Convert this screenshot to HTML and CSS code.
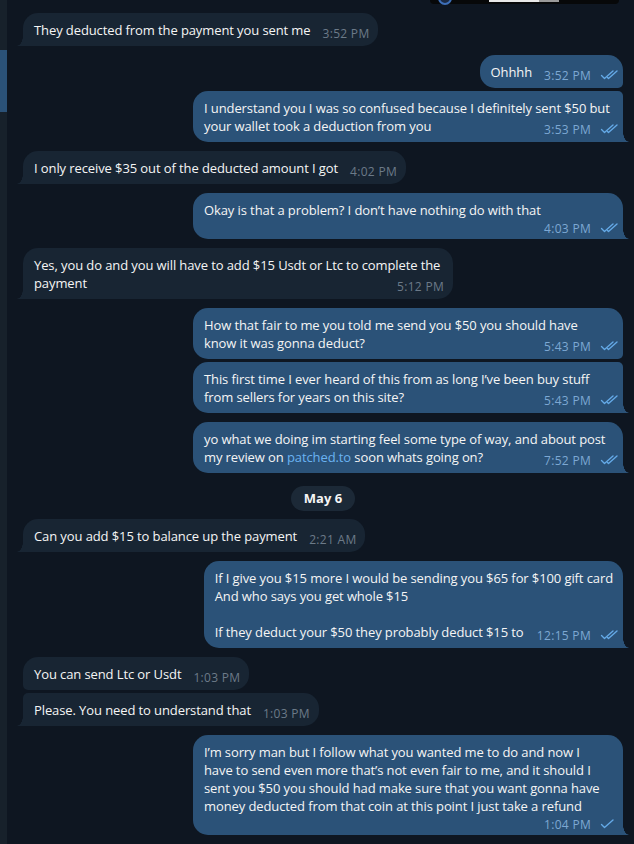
FILE: index.html
```html
<!DOCTYPE html>
<html lang="en">
<head>
<meta charset="utf-8">
<title>Chat</title>
<link rel="stylesheet" href="styles.css">
</head>
<body>
<div class="app">
  <aside class="rail"><div class="rail-active"></div></aside>
  <main class="chat">
    <div class="media"><span class="media-dot"></span><span class="media-bar"></span></div>

    <div class="group in">
      <div class="bubble">They deducted from the payment you sent me<span class="meta"><span class="time">3:52 PM</span></span></div>
    </div>

    <div class="group out">
      <div class="bubble">Ohhhh<span class="meta"><span class="time">3:52 PM</span><svg class="check" viewBox="0 0 18 10"><path d="M1.5 5.5l3 3L13 1"/><path d="M7.5 7.5l1 1L17 1"/></svg></span></div>
      <div class="bubble">I understand you I was so confused because I definitely sent $50 but your wallet took a deduction from you<span class="meta"><span class="time">3:53 PM</span><svg class="check" viewBox="0 0 18 10"><path d="M1.5 5.5l3 3L13 1"/><path d="M7.5 7.5l1 1L17 1"/></svg></span></div>
    </div>

    <div class="group in">
      <div class="bubble">I only receive $35 out of the deducted amount I got<span class="meta"><span class="time">4:02 PM</span></span></div>
    </div>

    <div class="group out">
      <div class="bubble stacked">Okay is that a problem? I don’t have nothing do with that<span class="meta"><span class="time">4:03 PM</span><svg class="check" viewBox="0 0 18 10"><path d="M1.5 5.5l3 3L13 1"/><path d="M7.5 7.5l1 1L17 1"/></svg></span></div>
    </div>

    <div class="group in">
      <div class="bubble">Yes, you do and you will have to add $15 Usdt or Ltc to complete the payment<span class="meta"><span class="time">5:12 PM</span></span></div>
    </div>

    <div class="group out">
      <div class="bubble">How that fair to me you told me send you $50 you should have know it was gonna deduct?<span class="meta"><span class="time">5:43 PM</span><svg class="check" viewBox="0 0 18 10"><path d="M1.5 5.5l3 3L13 1"/><path d="M7.5 7.5l1 1L17 1"/></svg></span></div>
      <div class="bubble">This first time I ever heard of this from as long I’ve been buy stuff from sellers for years on this site?<span class="meta"><span class="time">5:43 PM</span><svg class="check" viewBox="0 0 18 10"><path d="M1.5 5.5l3 3L13 1"/><path d="M7.5 7.5l1 1L17 1"/></svg></span></div>
    </div>

    <div class="group out">
      <div class="bubble">yo what we doing im starting feel some type of way, and about post my review on <a class="link" href="#">patched.to</a> soon whats going on?<span class="meta"><span class="time">7:52 PM</span><svg class="check" viewBox="0 0 18 10"><path d="M1.5 5.5l3 3L13 1"/><path d="M7.5 7.5l1 1L17 1"/></svg></span></div>
    </div>

    <div class="date"><span class="date-pill">May 6</span></div>

    <div class="group in">
      <div class="bubble">Can you add $15 to balance up the payment<span class="meta"><span class="time">2:21 AM</span></span></div>
    </div>

    <div class="group out">
      <div class="bubble">If I give you $15 more I would be sending you $65 for $100 gift card<br>And who says you get whole $15<br><br>If they deduct your $50 they probably deduct $15 to<span class="meta"><span class="time">12:15 PM</span><svg class="check" viewBox="0 0 18 10"><path d="M1.5 5.5l3 3L13 1"/><path d="M7.5 7.5l1 1L17 1"/></svg></span></div>
    </div>

    <div class="group in">
      <div class="bubble">You can send Ltc or Usdt<span class="meta"><span class="time">1:03 PM</span></span></div>
      <div class="bubble">Please. You need to understand that<span class="meta"><span class="time">1:03 PM</span></span></div>
    </div>

    <div class="group out">
      <div class="bubble stacked">I’m sorry man but I follow what you wanted me to do and now I<br>have to send even more that’s not even fair to me, and it should I sent you $50 you should had make sure that you want gonna have money deducted from that coin at this point I just take a refund<span class="meta"><span class="time">1:04 PM</span><svg class="check" viewBox="0 0 18 10"><path d="M1.5 5.5l3 3L13 1"/></svg></span></div>
    </div>
  </main>
</div>
</body>
</html>
```

FILE: styles.css
```css
* {
  box-sizing: border-box;
}

html,
body {
  margin: 0;
  background: #0e1621;
}

body {
  font-family: "Open Sans", "Noto Sans", sans-serif;
  font-size: 13px;
  color: #f5f5f5;
}

.app {
  display: flex;
  min-height: 844px;
  overflow: hidden;
}

.rail {
  flex: none;
  width: 7px;
  background: #17212b;
  padding-top: 50px;
}

.rail-active {
  height: 62px;
  background: #2b5278;
}

.chat {
  flex: 1;
  display: flex;
  flex-direction: column;
  padding: 0 11px 0 16px;
}

.media {
  position: relative;
  align-self: flex-end;
  width: 189px;
  height: 4px;
  margin-right: 4px;
  background: #070809;
  border-radius: 0 0 10px 10px;
}

.media-dot {
  position: absolute;
  left: 8px;
  top: -9px;
  width: 14px;
  height: 14px;
  border-radius: 50%;
  border: 2px solid #3d6fb8;
  background: #1b2a44;
}

.media-bar {
  position: absolute;
  left: 59px;
  top: 0;
  width: 70px;
  height: 2px;
  background: linear-gradient(to right, #e8e8e8 0 72%, #9a9a9a 72% 100%);
}

.group {
  display: flex;
  flex-direction: column;
  gap: 3px;
  margin-top: 9px;
}

.group.in {
  align-items: flex-start;
}

.group.out {
  align-items: flex-end;
}

.bubble {
  position: relative;
  max-width: 430px;
  padding: 8px 9px 7px 11px;
  border-radius: 15px;
  line-height: 18px;
  letter-spacing: -0.1px;
  overflow-wrap: break-word;
}

.in .bubble {
  background: #182533;
}

.out .bubble {
  background: #2b5278;
  padding-right: 10px;
}

.in .bubble:not(:first-child) {
  border-top-left-radius: 5px;
}

.in .bubble:not(:last-child) {
  border-bottom-left-radius: 5px;
}

.in .bubble:last-child {
  border-bottom-left-radius: 0;
}

.out .bubble:not(:first-child) {
  border-top-right-radius: 5px;
}

.out .bubble:not(:last-child) {
  border-bottom-right-radius: 5px;
}

.out .bubble:last-child {
  border-bottom-right-radius: 0;
}

.in .bubble:last-child::before,
.out .bubble:last-child::before {
  content: "";
  position: absolute;
  bottom: 0;
  width: 6px;
  height: 10px;
}

.in .bubble:last-child::before {
  left: -6px;
  background: radial-gradient(6px 10px at 0 0, transparent 94%, #182533 100%);
}

.out .bubble:last-child::before {
  right: -6px;
  background: radial-gradient(6px 10px at 100% 0, transparent 94%, #2b5278 100%);
}

.meta {
  float: right;
  display: flex;
  align-items: baseline;
  margin: 7px 0 -2px 12px;
  font-size: 12px;
  line-height: 12px;
  letter-spacing: 0.3px;
  color: #6c7a88;
  white-space: nowrap;
}

.out .meta {
  color: #7da8d3;
  margin-right: -5px;
}

.stacked .meta {
  margin-top: 4px;
  margin-bottom: -3px;
}

.check {
  width: 18px;
  height: 10px;
  margin-left: 9px;
  fill: none;
  stroke: #64a9e6;
  stroke-width: 1.4;
  stroke-linecap: round;
  stroke-linejoin: round;
}

.link {
  color: #6ab2f2;
  text-decoration: none;
}

.date {
  display: flex;
  justify-content: center;
  margin-top: 13px;
}

.date + .group {
  margin-top: 8px;
}

.date-pill {
  height: 25px;
  padding: 0 13px;
  border-radius: 13px;
  background: #1c2937;
  font-weight: 700;
  font-size: 13px;
  line-height: 25px;
  color: #f5f5f5;
}
```
